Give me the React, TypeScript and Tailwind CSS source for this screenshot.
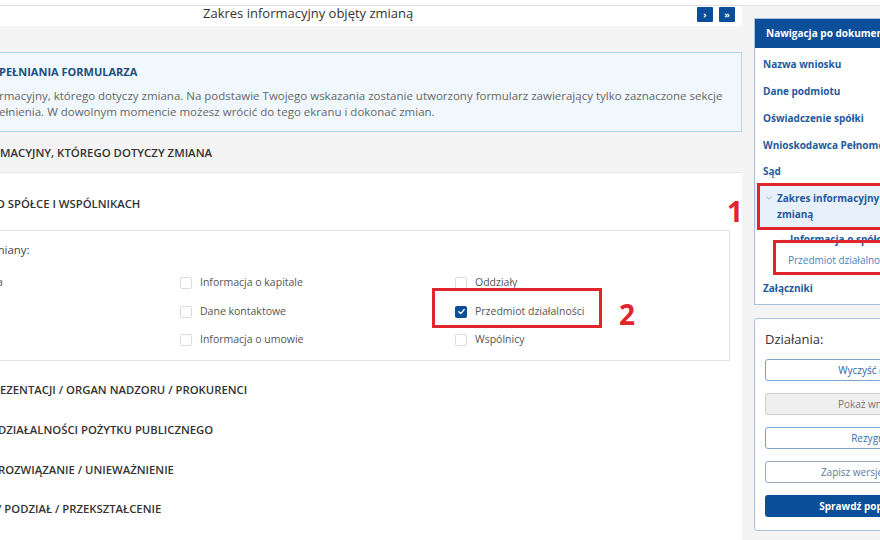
import React from "react";
import { ChevronDown } from "lucide-react";

function Box({ checked = false }: { checked?: boolean }) {
  if (checked) {
    return (
      <span className="w-[12px] h-[12px] rounded-[2px] bg-[#0b4e9a] flex items-center justify-center shrink-0">
        <svg width="9" height="9" viewBox="0 0 10 10">
          <path d="M2 5.2 L4.2 7.3 L8 2.8" fill="none" stroke="#fff" strokeWidth="1.5" strokeLinecap="round" strokeLinejoin="round" />
        </svg>
      </span>
    );
  }
  return <span className="w-[12px] h-[12px] rounded-[2px] border border-[#dcdcdc] bg-white shrink-0" />;
}

function Opt({ label, checked = false }: { label: string; checked?: boolean }) {
  return (
    <div className="h-[28.5px] flex items-center gap-[8px]">
      <Box checked={checked} />
      <span className="text-[10.5px] text-[#555] whitespace-nowrap">{label}</span>
    </div>
  );
}

export default function App() {
  const navItem = "h-[27px] flex items-center px-[8px] text-[10px] font-bold text-[#1d5aa0] whitespace-nowrap";
  return (
    <div className="relative w-[880px] h-[540px] overflow-hidden bg-[#f4f4f4] font-['Open_Sans',sans-serif]">
      <div className="h-[6px] bg-white border-b border-[#e2e2e2]" />
      <div className="flex">
        {/* main column */}
        <main className="w-[742px] shrink-0 flex flex-col h-[534px]">
          <div className="h-[20px] bg-white flex items-start">
            <div className="pl-[203px] pt-[1px] text-[13px] leading-[12px] text-[#333] flex-1 whitespace-nowrap">Zakres informacyjny objęty zmianą</div>
            <div className="flex gap-[6px] mt-[1px] mr-[7px]">
              <div className="w-[16px] h-[15px] bg-[#0b4e9a] rounded-[1px] text-white text-[9px] font-bold leading-[15px] text-center">›</div>
              <div className="w-[16px] h-[15px] bg-[#0b4e9a] rounded-[1px] text-white text-[9px] font-bold leading-[15px] text-center">»</div>
            </div>
          </div>

          <div className="mt-[26px] border border-l-0 border-[#b3d4ec] bg-[#f1f8fd] pt-[10px] pb-[11px]">
            <div className="text-[11px] leading-[18px] font-bold text-[#1c4d7e] -ml-[1px] whitespace-nowrap">PEŁNIANIA FORMULARZA</div>
            <div className="mt-[7px] text-[11.5px] leading-[16px] text-[#666] whitespace-nowrap -ml-[1px]">
              rmacyjny, którego dotyczy zmiana. Na podstawie Twojego wskazania zostanie utworzony formularz zawierający tylko zaznaczone sekcje
            </div>
            <div className="text-[11.5px] leading-[16px] text-[#666] whitespace-nowrap -ml-[1px]">
              ełnienia. W dowolnym momencie możesz wrócić do tego ekranu i dokonać zmian.
            </div>
          </div>

          <div className="h-[40px] pt-[1px] flex items-center text-[11.4px] font-semibold text-[#333] whitespace-nowrap">
            MACYJNY, KTÓREGO DOTYCZY ZMIANA
          </div>

          <div className="flex-1 bg-white border-t border-[#e6e6e6]">
            <div className="h-[57px] pt-[6px] flex items-center text-[11.3px] font-semibold text-[#333] whitespace-nowrap -ml-[4px]">
              O SPÓŁCE I WSPÓLNIKACH
            </div>
            <div className="mr-[12px] border border-l-0 border-[#e3e3e3] pt-[10px] pb-[5px]">
              <div className="text-[11.4px] leading-[17px] text-[#444] -ml-[6px] whitespace-nowrap">miany:</div>
              <div className="mt-[11px] flex">
                <div className="w-[180px] shrink-0">
                  <div className="h-[28.5px] flex items-center text-[10.5px] text-[#555] -ml-[3px]">a</div>
                </div>
                <div className="w-[275px] shrink-0">
                  <Opt label="Informacja o kapitale" />
                  <Opt label="Dane kontaktowe" />
                  <Opt label="Informacja o umowie" />
                </div>
                <div className="flex-1">
                  <Opt label="Oddziały" />
                  <Opt label="Przedmiot działalności" checked />
                  <Opt label="Wspólnicy" />
                </div>
              </div>
            </div>
            <div className="mt-[10px] text-[11.3px] font-semibold text-[#333] whitespace-nowrap">
              <div className="h-[40px] flex items-center">EZENTACJI / ORGAN NADZORU / PROKURENCI</div>
              <div className="h-[40px] flex items-center -ml-[2px]">DZIAŁALNOŚCI POŻYTKU PUBLICZNEGO</div>
              <div className="h-[39px] flex items-center -ml-[2px]">ROZWIĄZANIE / UNIEWAŻNIENIE</div>
              <div className="h-[40px] flex items-center -ml-[3px]">/ PODZIAŁ / PRZEKSZTAŁCENIE</div>
            </div>
          </div>
        </main>

        {/* sidebar */}
        <aside className="ml-[12px] w-[236px] shrink-0 pt-[12px]">
          <div className="border border-[#a9c0d8] bg-white">
            <div className="h-[29px] bg-[#0b4e9a] flex items-center px-[11px] text-[10px] font-bold text-white whitespace-nowrap">
              Nawigacja po dokumencie
            </div>
            <div className="pt-[3px] pb-[2px]">
              <div className={navItem}>Nazwa wniosku</div>
              <div className={navItem}>Dane podmiotu</div>
              <div className={navItem}>Oświadczenie spółki</div>
              <div className={navItem}>Wnioskodawca Pełnomocnik</div>
              <div className="h-[24px] flex items-center px-[8px] text-[10px] font-bold text-[#1d5aa0]">Sąd</div>
              <div className="relative h-[47px] bg-[#e8f1fb] flex items-start pl-[9px] pt-[7px]">
                <ChevronDown size={10} strokeWidth={1.6} className="text-[#7d9ec2] mt-[3px] shrink-0" />
                <div className="ml-[3px] text-[10px] leading-[16px] font-bold text-[#1d5aa0] whitespace-nowrap">
                  Zakres informacyjny objęty
                  <br />
                  zmianą
                </div>
                <div className="absolute left-[2px] top-0 -right-[10px] bottom-0 border-[3px] border-[#e0252d]" />
              </div>
              <div className="relative">
                <div className="h-[18px] flex items-center pl-[24px] text-[10px] font-bold text-[#1d5aa0] whitespace-nowrap">
                  <span className="text-[#7d9ec2] mr-[3px] text-[9px]">⌄</span>Informacja o spółce
                </div>
                <div className="h-[24px] flex items-center pl-[33px] text-[10px] text-[#4a80c4] whitespace-nowrap">
                  Przedmiot działalności
                </div>
                <div className="absolute left-[18px] top-[10px] h-[35px] -right-[10px] border-[3px] border-[#e0252d]" />
              </div>
              <div className={navItem + " mt-[3px]"}>Załączniki</div>
            </div>
          </div>

          <div className="mt-[13px] border border-[#a9c0d8] rounded-[3px] bg-white px-[10px] pt-[11px] pb-[13px]">
            <div className="text-[13px] leading-[18px] text-[#333]">Działania:</div>
            <div className="mt-[11px] flex flex-col gap-[12px] text-[10px]">
              <div className="h-[22px] border border-[#7ea3c9] rounded-[3px] bg-white text-[#2f64a3] flex items-center justify-center">Wyczyść ekran</div>
              <div className="h-[22px] border border-[#cfcfcf] rounded-[3px] bg-[#efefef] text-[#777] flex items-center justify-center">Pokaż wniosek</div>
              <div className="h-[22px] border border-[#7ea3c9] rounded-[3px] bg-white text-[#3a6fb0] flex items-center justify-center">Rezygnuj</div>
              <div className="h-[22px] border border-[#94aac2] rounded-[3px] bg-white text-[#5b7b9c] flex items-center justify-center">Zapisz wersję roboczą</div>
              <div className="h-[22px] rounded-[3px] bg-[#0b4e9a] text-white font-bold flex items-center justify-center">Sprawdź poprawność</div>
            </div>
          </div>
        </aside>
      </div>

      {/* annotations */}
      <div className="absolute left-[432px] top-[288px] w-[170px] h-[40px] border-[3px] border-[#e0252d]" />
      <div className="absolute left-[619px] top-[300px] text-[28px] leading-[28px] font-bold text-[#e0252d]">2</div>
      <div className="absolute left-[727px] top-[197px] text-[28px] leading-[28px] font-bold text-[#e0252d]">1</div>
    </div>
  );
}
